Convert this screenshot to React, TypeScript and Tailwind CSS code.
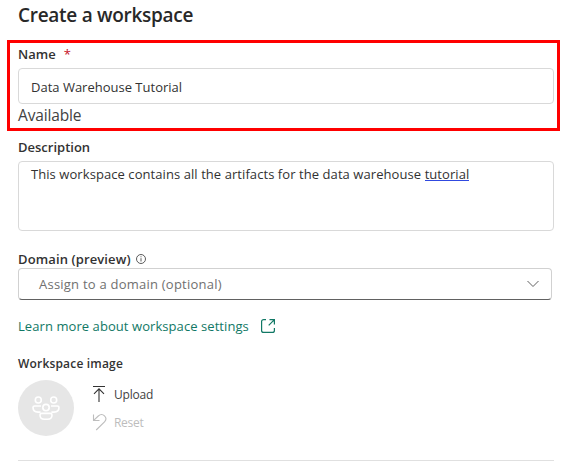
import React from "react";

const labelClass = "whitespace-nowrap text-[13px] font-semibold leading-4 text-[#323232]";

function InfoIcon() {
  return (
    <svg width="10" height="10" viewBox="0 0 10 10" fill="none" stroke="#4a4a4a" strokeWidth="0.9">
      <circle cx="5" cy="5" r="4.5" />
      <path d="M5 4.2v3.3M5 2.3v1" />
    </svg>
  );
}

function OpenIcon() {
  return (
    <svg width="16" height="16" viewBox="0 0 16 16" fill="none" stroke="#117865" strokeWidth="1.2">
      <path d="M6 1.6H3.6a2 2 0 0 0-2 2v8.8a2 2 0 0 0 2 2h8.8a2 2 0 0 0 2-2V10M9.5 1.6h4.9v4.9M14.4 1.6L8.7 7.3" />
    </svg>
  );
}

function PeopleIcon() {
  return (
    <svg width="28" height="24" viewBox="0 0 28 24" fill="none" stroke="#fff" strokeWidth="1.6">
      <circle cx="6.3" cy="4" r="3" />
      <circle cx="21.700" cy="4" r="3" />
      <circle cx="14" cy="11.600" r="3.200" />
      <path d="M9 10H2.600Q1 10 1 11.600q0 4.500 5 4.500h2.600M19 10h6.400q1.600 0 1.600 1.600 0 4.500-5 4.500h-2.600" />
      <path d="M9.600 17.400h8.800q1.600 0 1.600 1.500 0 4.300-4.500 4.300h-3q-4.500 0-4.500-4.300 0-1.500 1.600-1.500z" />
    </svg>
  );
}

function UploadIcon() {
  return (
    <svg width="14" height="18" viewBox="0 0 14 18" fill="none" stroke="#333" strokeWidth="1.1">
      <path d="M1 1.500h12M7 17V4M2 8.800L7 3.800l5 5" />
    </svg>
  );
}

function ResetIcon() {
  return (
    <svg width="15" height="18" viewBox="0 0 15 18" fill="none" stroke="#bdbdbd" strokeWidth="1.1">
      <path d="M1.500 1.500v6h6M1.700 7.300L6.300 3C8.300 1.200 10.800 1.200 12.500 2.900s1.700 4.200 0 5.900L4.200 17" />
    </svg>
  );
}

export default function App() {
  return (
    <main className="h-[464px] w-[571px] overflow-hidden bg-white font-['Open_Sans','Noto_Sans',sans-serif] text-[#323232]">
      <header className="flex h-10 items-start pl-[18px] pt-[3px]">
        <h1 className="whitespace-nowrap text-[19px] font-[550] leading-6 tracking-[-0.28px] text-[#282828]">Create a workspace</h1>
      </header>

      <section className="ml-[7px] h-[91px] w-[553px] border-[3px] border-[#ff0000] pl-2">
        <div className="flex h-[25px] gap-2 pt-[3px]">
          <label className={labelClass}>Name</label>
          <span className="text-[13px] leading-4 text-[#c50f1f]">*</span>
        </div>
        <div className="flex h-9 w-[536px] items-center rounded-[4px] border border-[#d9d9d9] pl-3 pt-[2px]">
          <span className="whitespace-nowrap text-[13px] leading-4">Data Warehouse Tutorial</span>
        </div>
        <p className="whitespace-nowrap text-[15.5px] leading-[23px] tracking-[-0.15px] text-[#424242]">Available</p>
      </section>

      <section className="pl-[18px]">
        <div className="h-[30px] pt-2">
          <p className={labelClass}>Description</p>
        </div>
        <div className="h-[70px] w-[536px] rounded-[4px] border border-[#d9d9d9] pl-3 pt-1">
          <p className="flex whitespace-pre text-[13px] leading-4 tracking-[0.07px]">
            <span>{"This workspace contains all the artifacts for the data warehouse "}</span>
            <span className="h-[15px] border-b border-[#3049e0]">tutorial</span>
          </p>
        </div>
      </section>

      <section className="pl-[18px]">
        <div className="flex h-[37px] gap-[5px] pt-5">
          <p className={`${labelClass} tracking-[0.12px]`}>Domain (preview)</p>
          <span className="pt-[3px]"><InfoIcon /></span>
        </div>
        <div className="flex h-8 w-[534px] items-center justify-between rounded-[4px] border border-[#d1d1d1] border-b-[#616161] pl-5 pr-3">
          <span className="whitespace-nowrap text-[13px] leading-4 tracking-[0.23px] text-[#707070]">Assign to a domain (optional)</span>
          <svg width="12" height="8" viewBox="0 0 12 8" fill="none" stroke="#616161">
            <path d="M.5 1L6 6.500 11.500 1" />
          </svg>
        </div>
        <a className="flex h-[52px] items-center gap-[11px] text-[#117865]">
          <span className="whitespace-nowrap text-[13px] leading-4 tracking-[0.07px]">Learn more about workspace settings</span>
          <OpenIcon />
        </a>
      </section>

      <section className="ml-[18px] h-[109px] w-[536px] border-b border-[#e0e0e0]">
        <p className="h-7 whitespace-nowrap pt-1 text-[12px] font-semibold leading-4 tracking-[0.18px]">Workspace image</p>
        <div className="flex">
          <div className="flex h-14 w-14 items-center justify-center rounded-full bg-[#e6e6e6]">
            <PeopleIcon />
          </div>
          <div className="ml-[18px] flex flex-col">
            <button className="flex h-7 items-center gap-2">
              <UploadIcon />
              <span className="pt-[2px] text-[12px] leading-4 tracking-[-0.2px] text-[#424242]">Upload</span>
            </button>
            <button className="flex h-7 items-center gap-[7px]">
              <ResetIcon />
              <span className="pt-[2px] text-[12px] leading-4 tracking-[-0.3px] text-[#bdbdbd]">Reset</span>
            </button>
          </div>
        </div>
      </section>
    </main>
  );
}
